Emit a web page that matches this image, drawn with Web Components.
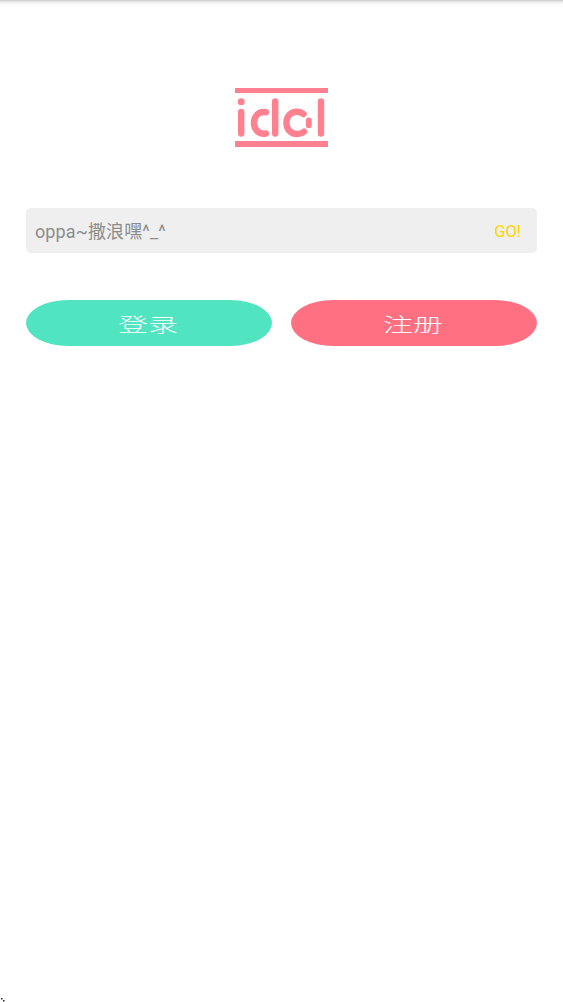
<!DOCTYPE html>
<html lang="zh">
<head>
<meta charset="utf-8">
<title>idol</title>
<style>
  html, body { margin: 0; height: 100%; background: #fff; }
  body { font-family: Roboto, "Noto Sans CJK SC", sans-serif; }
</style>
</head>
<body>
<login-page>
  <idol-logo></idol-logo>
  <code-field slot="field" placeholder="oppa~撒浪嘿^_^" action="GO!"></code-field>
  <pill-button slot="actions" color="#50e5c0">登录</pill-button>
  <pill-button slot="actions" color="#ff7182">注册</pill-button>
</login-page>

<script>
class LoginPage extends HTMLElement {
  constructor() {
    super();
    this.shadowDOM = this.attachShadow({mode: 'open'});
    this.shadowDOM.innerHTML = `
      <style>
        :host {
          position: relative;
          display: flex;
          flex-direction: column;
          box-sizing: border-box;
          height: 1002px;
          padding: 88px 26px 0;
          background: linear-gradient(#c9c9c9 0, #ececec 2px, #fafafa 4px, #fff 8px);
        }
        .logo { display: flex; justify-content: center; }
        .field { margin-top: 61px; }
        .actions { margin-top: 47px; display: flex; gap: 19px; }
        .specks { position: absolute; left: 0; bottom: 0; display: block; }
      </style>
      <div class="logo"><slot></slot></div>
      <div class="field"><slot name="field"></slot></div>
      <div class="actions"><slot name="actions"></slot></div>
      <svg class="specks" width="5" height="5" viewBox="0 0 5 5" fill="#222">
        <rect x="1" y="1" width="1.5" height="1.5"/>
        <rect x="3" y="3" width="1.5" height="1.5"/>
      </svg>
    `;
  }
}

class IdolLogo extends HTMLElement {
  constructor() {
    super();
    this.shadowDOM = this.attachShadow({mode: 'open'});
    this.shadowDOM.innerHTML = `
      <style>
        :host { display: block; width: 93px; height: 59px; }
        svg { display: block; }
      </style>
      <svg width="93" height="59" viewBox="0 0 93 59" fill="none" stroke="#ff8190" stroke-width="6.4" stroke-linecap="round">
        <path d="M0 2.5H93" stroke-width="5" stroke-linecap="butt"/>
        <path d="M0 56H93" stroke-width="6" stroke-linecap="butt"/>
        <circle cx="6.2" cy="13.7" r="3.5" fill="#ff8190" stroke="none"/>
        <path d="M6.2 24V45.5"/>
        <path d="M31 24.2C23.5 23 19 28 19 34.85S23.5 46.7 31 45.5"/>
        <path d="M40.2 13.5V45.5"/>
        <path d="M68.5 26C66.5 24.3 64.4 23.7 62 23.7C55.5 23.7 51.4 28.6 51.4 34.85S55.5 46 62 46C64.4 46 67 45.3 69 43.6"/>
        <path d="M73.8 32.5V37.2" stroke-width="5.8"/>
        <path d="M86 13.5V45.5"/>
      </svg>
    `;
  }
}

class CodeField extends HTMLElement {
  constructor() {
    super();
    this.shadowDOM = this.attachShadow({mode: 'open'});
  }

  connectedCallback() {
    this.shadowDOM.innerHTML = `
      <style>
        :host {
          display: flex;
          align-items: center;
          justify-content: space-between;
          height: 45px;
          padding: 0 16px 0 9px;
          border-radius: 5px;
          background: #efefef;
        }
        .hint { color: #8c8c8c; font-size: 18px; letter-spacing: .1px; padding-bottom: 2px; }
        .go { color: #ffd400; font-size: 16.5px; padding-top: 1px; }
      </style>
      <span class="hint">${this.getAttribute('placeholder')}</span>
      <span class="go">${this.getAttribute('action')}</span>
    `;
  }
}

class PillButton extends HTMLElement {
  constructor() {
    super();
    this.shadowDOM = this.attachShadow({mode: 'open'});
  }

  connectedCallback() {
    this.shadowDOM.innerHTML = `
      <style>
        :host {
          flex: 1;
          display: flex;
          align-items: center;
          justify-content: center;
          height: 46px;
          border-radius: 42px / 23px;
          background: ${this.getAttribute('color')};
          color: #fff;
          font-size: 20px;
          font-weight: 300;
        }
        span { display: block; transform: translateX(-1px) scale(1.5, .95); }
      </style>
      <span><slot></slot></span>
    `;
  }
}

customElements.define('login-page', LoginPage);
customElements.define('idol-logo', IdolLogo);
customElements.define('code-field', CodeField);
customElements.define('pill-button', PillButton);
</script>
</body>
</html>
